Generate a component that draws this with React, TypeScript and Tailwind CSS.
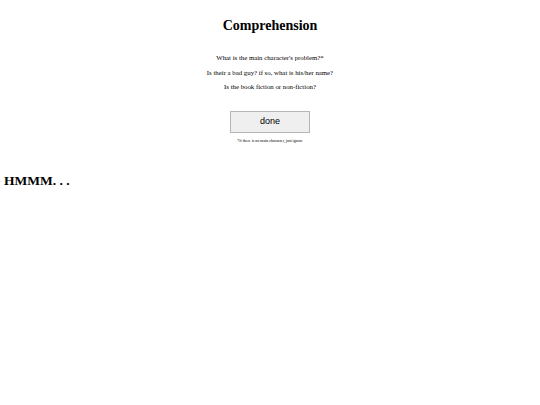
export default function App() {
  return (
    <div className="min-h-screen bg-white text-black" style={{ fontFamily: '"Liberation Serif", serif' }}>
      <div className="flex flex-col items-center pt-[17px]">
        <h1 className="text-[14px] font-bold leading-[18px]">Comprehension</h1>
        <div className="mt-[19px] flex flex-col items-center gap-[6.5px] text-[6.8px] leading-[8px]">
          <p>What is the main character's problem?*</p>
          <p>Is their a bad guy? if so, what is his/her name?</p>
          <p>Is the book fiction or non-fiction?</p>
        </div>
        <button
          className="mt-[20px] w-[80px] h-[22px] bg-[#efefef] border border-[#b5b5b5] text-[9px] text-black"
          style={{ fontFamily: '"Liberation Sans", sans-serif' }}
        >
          done
        </button>
        <p className="mt-[5px] text-[4px] leading-[5px]">*if there is no main character, just ignore</p>
      </div>
      <h2 className="mt-[29px] pl-[4px] text-[13.5px] font-bold leading-[18px]">HMMM. . .</h2>
    </div>
  );
}
